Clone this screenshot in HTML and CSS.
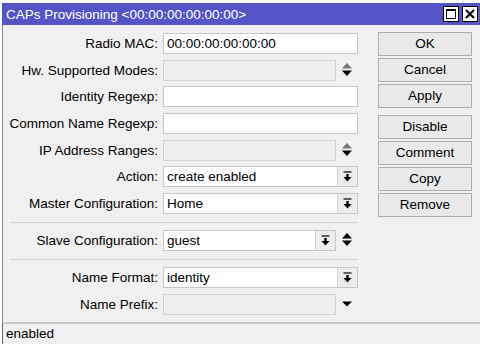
FILE: index.html
```html
<!DOCTYPE html>
<html>
<head>
<meta charset="utf-8">
<link rel="stylesheet" href="styles.css">
</head>
<body>
<div class="window">
  <div class="titlebar">
    <span class="title">CAPs Provisioning &lt;00:00:00:00:00:00&gt;</span>
    <div class="tb-btns">
      <span class="tb-btn"><span class="max-icon"></span></span>
      <span class="tb-btn">
        <svg width="10" height="10" viewBox="0 0 10 10"><path d="M1 1 L9 9 M9 1 L1 9" stroke="#000" stroke-width="2.2"/></svg>
      </span>
    </div>
  </div>
  <div class="content">
    <div class="form">
      <div class="group">
        <div class="row"><span class="label">Radio MAC:</span><span class="input">00:00:00:00:00:00</span></div>
        <div class="row"><span class="label">Hw. Supported Modes:</span><span class="input short disabled"></span>
          <span class="spin"><svg width="12" height="16" viewBox="0 0 12 16"><path d="M6 1 L11 6.5 L1 6.5 Z" fill="#7a7a7a"/><path d="M1 8.5 L11 8.5 L6 14 Z" fill="#000"/></svg></span></div>
        <div class="row"><span class="label">Identity Regexp:</span><span class="input"></span></div>
        <div class="row"><span class="label">Common Name Regexp:</span><span class="input"></span></div>
        <div class="row"><span class="label">IP Address Ranges:</span><span class="input short disabled"></span>
          <span class="spin"><svg width="12" height="16" viewBox="0 0 12 16"><path d="M6 1 L11 6.5 L1 6.5 Z" fill="#7a7a7a"/><path d="M1 8.5 L11 8.5 L6 14 Z" fill="#000"/></svg></span></div>
        <div class="row"><span class="label">Action:</span>
          <span class="combo"><span class="val">create enabled</span><span class="dd"><svg width="9" height="11" viewBox="0 0 9 11"><path d="M0.5 1 H8.5" stroke="#000" stroke-width="1.2"/><path d="M3.3 3 H5.7 V6 H8.5 L4.5 10.5 L0.5 6 H3.3 Z" fill="#000"/></svg></span></span></div>
        <div class="row"><span class="label">Master Configuration:</span>
          <span class="combo"><span class="val">Home</span><span class="dd"><svg width="9" height="11" viewBox="0 0 9 11"><path d="M0.5 1 H8.5" stroke="#000" stroke-width="1.2"/><path d="M3.3 3 H5.7 V6 H8.5 L4.5 10.5 L0.5 6 H3.3 Z" fill="#000"/></svg></span></span></div>
      </div>
      <div class="separator"></div>
      <div class="group">
        <div class="row"><span class="label">Slave Configuration:</span>
          <span class="combo short"><span class="val">guest</span><span class="dd"><svg width="9" height="11" viewBox="0 0 9 11"><path d="M0.5 1 H8.5" stroke="#000" stroke-width="1.2"/><path d="M3.3 3 H5.7 V6 H8.5 L4.5 10.5 L0.5 6 H3.3 Z" fill="#000"/></svg></span></span>
          <span class="spin"><svg width="12" height="16" viewBox="0 0 12 16"><path d="M6 1 L11 6.5 L1 6.5 Z" fill="#000"/><path d="M1 8.5 L11 8.5 L6 14 Z" fill="#000"/></svg></span></div>
      </div>
      <div class="separator"></div>
      <div class="group">
        <div class="row"><span class="label">Name Format:</span>
          <span class="combo"><span class="val">identity</span><span class="dd"><svg width="9" height="11" viewBox="0 0 9 11"><path d="M0.5 1 H8.5" stroke="#000" stroke-width="1.2"/><path d="M3.3 3 H5.7 V6 H8.5 L4.5 10.5 L0.5 6 H3.3 Z" fill="#000"/></svg></span></span></div>
        <div class="row"><span class="label">Name Prefix:</span><span class="input short disabled"></span>
          <span class="spin"><svg width="12" height="8" viewBox="0 0 12 8"><path d="M1 1.5 L11 1.5 L6 6.5 Z" fill="#000"/></svg></span></div>
      </div>
    </div>
    <div class="buttons">
      <div class="btn">OK</div>
      <div class="btn">Cancel</div>
      <div class="btn">Apply</div>
      <div class="btn spaced">Disable</div>
      <div class="btn">Comment</div>
      <div class="btn">Copy</div>
      <div class="btn">Remove</div>
    </div>
  </div>
  <div class="status">enabled</div>
</div>
</body>
</html>
```
FILE: styles.css
```css
html, body {
  margin: 0;
  height: 344px;
  overflow: hidden;
}
body {
  background: #ffffff;
  font-family: "Liberation Sans", Arial, sans-serif;
  font-size: 13.5px;
  color: #000;
  padding: 3px 0 0 2px;
  box-sizing: border-box;
}
.window {
  height: 341px;
  display: flex;
  flex-direction: column;
  background: #f0f0f0;
}
.titlebar {
  height: 22px;
  flex: none;
  background: #5454c6;
  color: #fff;
  display: flex;
  align-items: center;
  justify-content: space-between;
  padding: 0 2px 0 4px;
}
.title {
  font-size: 13.5px;
  white-space: nowrap;
}
.tb-btns {
  display: flex;
  gap: 3px;
}
.tb-btn {
  width: 16px;
  height: 16px;
  box-sizing: border-box;
  background: #fff;
  border: 1px solid #000;
  display: flex;
  align-items: center;
  justify-content: center;
}
.max-icon {
  width: 10px;
  height: 10px;
  box-sizing: border-box;
  border: 1px solid #000;
  border-top-width: 2px;
}
.content {
  flex: 1;
  display: flex;
  border-left: 1px solid #8a8a8a;
}
.form {
  width: 365px;
  padding-top: 8px;
  display: flex;
  flex-direction: column;
}
.group {
  display: flex;
  flex-direction: column;
  gap: 5.67px;
}
.row {
  display: flex;
  align-items: center;
  height: 21px;
}
.label {
  width: 155px;
  margin-right: 5px;
  text-align: right;
  white-space: nowrap;
}
.input {
  width: 195px;
  height: 21px;
  box-sizing: border-box;
  border: 1px solid #c8c8c8;
  background: #fff;
  padding-left: 3px;
  line-height: 19px;
}
.input.short {
  width: 173px;
}
.input.disabled {
  background: #efefef;
  border-color: #d2d2d2;
}
.combo {
  width: 195px;
  height: 21px;
  box-sizing: border-box;
  border: 1px solid #c8c8c8;
  background: #fff;
  display: flex;
}
.combo.short {
  width: 173px;
}
.val {
  flex: 1;
  padding-left: 3px;
  line-height: 19px;
}
.dd {
  width: 19px;
  border-left: 1px solid #d2d2d2;
  background: #ececec;
  display: flex;
  align-items: center;
  justify-content: center;
}
.spin {
  width: 22px;
  display: flex;
  align-items: center;
  justify-content: center;
}
.separator {
  margin: 8px 0 7px 7px;
  width: 348px;
  height: 1px;
  background: #d2d2d2;
}
.buttons {
  width: 94px;
  margin-left: 10px;
  padding-top: 7px;
  display: flex;
  flex-direction: column;
  gap: 2px;
}
.btn {
  height: 24px;
  box-sizing: border-box;
  border: 1px solid #adadad;
  background: #e9e9e9;
  text-align: center;
  line-height: 22px;
}
.btn.spaced {
  margin-top: 5px;
}
.status {
  height: 20px;
  flex: none;
  border-top: 2px solid #c8c8c8;
  border-left: 1px solid #666;
  padding-left: 3px;
  line-height: 20px;
}
```
